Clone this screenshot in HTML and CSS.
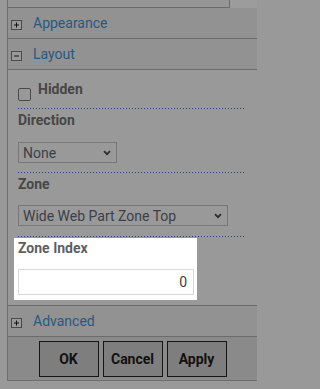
FILE: index.html
```html
<!DOCTYPE html>
<html>
<head>
<meta charset="utf-8">
<link rel="stylesheet" href="styles.css">
</head>
<body>
<div class="pane">
  <div class="top-row"><div class="prev"></div></div>
  <div class="hdr">
    <svg class="tog" width="11" height="10" viewBox="0 0 11 10"><rect x="0.5" y="0.5" width="10" height="9" fill="#9a9a9a" stroke="#4a4a4a"/><path d="M3 5H8M5.5 2.5V7.5" stroke="#111" stroke-width="1"/></svg>
    <span class="hdr-text">Appearance</span>
  </div>
  <div class="hdr">
    <svg class="tog" width="11" height="10" viewBox="0 0 11 10"><rect x="0.5" y="0.5" width="10" height="9" fill="#9a9a9a" stroke="#4a4a4a"/><path d="M3 5H8" stroke="#111" stroke-width="1"/></svg>
    <span class="hdr-text">Layout</span>
  </div>
  <div class="content">
    <div class="check-row dotted">
      <span class="checkbox"></span>
      <span class="lbl check-lbl">Hidden</span>
    </div>
    <div class="field dotted dir">
      <div class="lbl">Direction</div>
      <div class="sel sel-none"><span>None</span><svg class="chev" width="8" height="6" viewBox="0 0 8 6"><path d="M1 1.2L4 4.2L7 1.2" fill="none" stroke="#2e2e2e" stroke-width="1.8"/></svg></div>
    </div>
    <div class="field dotted zone">
      <div class="lbl">Zone</div>
      <div class="sel sel-zone"><span>Wide Web Part Zone Top</span><svg class="chev" width="8" height="6" viewBox="0 0 8 6"><path d="M1 1.2L4 4.2L7 1.2" fill="none" stroke="#2e2e2e" stroke-width="1.8"/></svg></div>
    </div>
    <div class="spot">
      <div class="lbl spot-lbl">Zone Index</div>
      <div class="input">0</div>
    </div>
  </div>
  <div class="hdr">
    <svg class="tog" width="11" height="10" viewBox="0 0 11 10"><rect x="0.5" y="0.5" width="10" height="9" fill="#9a9a9a" stroke="#4a4a4a"/><path d="M3 5H8M5.5 2.5V7.5" stroke="#111" stroke-width="1"/></svg>
    <span class="hdr-text">Advanced</span>
  </div>
  <div class="footer">
    <button class="btn">OK</button>
    <button class="btn">Cancel</button>
    <button class="btn">Apply</button>
  </div>
</div>
</body>
</html>
```
FILE: styles.css
```css
html, body {
  margin: 0;
  padding: 0;
  background: #999999;
  font-family: Roboto, "Liberation Sans", sans-serif;
}
.pane {
  margin-left: 7px;
  width: 249px;
  border-left: 1px solid #6e6e6e;
  border-bottom: 1px solid #6e6e6e;
}
.top-row {
  background: #9c9c9c;
  height: 8px;
}
.prev {
  width: 221px;
  height: 7px;
  background: #969696;
  border-right: 1px solid #6b6b6b;
  border-bottom: 1px solid #6b6b6b;
}
.hdr {
  height: 30px;
  background: #929292;
  border-bottom: 1px solid #6b6b6b;
  display: flex;
  align-items: center;
  padding-left: 3px;
}
.tog {
  display: block;
  margin-top: 3px;
  flex: none;
}
.hdr-text {
  margin-left: 11px;
  font-size: 14px;
  line-height: 16px;
  color: #2a5880;
}
.content {
  padding: 0 12px 5px 10px;
  border-bottom: 1px solid #6b6b6b;
}
.dotted {
  background-image: repeating-linear-gradient(to right, #2c3f78 0 1px, transparent 1px 3px);
  background-size: 100% 1px;
  background-position: left bottom;
  background-repeat: no-repeat;
}
.check-row {
  height: 39px;
  display: flex;
  align-items: flex-start;
}
.checkbox {
  display: block;
  margin-top: 18px;
  width: 11px;
  height: 11px;
  border: 1px solid #4a4a4a;
  border-radius: 2px;
  background: #999;
}
.lbl {
  font-size: 14px;
  line-height: 16px;
  font-weight: bold;
  color: #474747;
}
.check-lbl {
  margin-top: 11px;
  margin-left: 7px;
}
.field {
  padding-top: 3px;
}
.dir {
  padding-bottom: 10px;
}
.zone {
  padding-bottom: 11px;
}
.dir .sel {
  margin-top: 14px;
}
.zone .sel {
  margin-top: 13px;
}
.sel {
  box-sizing: border-box;
  height: 21px;
  border: 1px solid #777;
  display: flex;
  align-items: center;
  justify-content: space-between;
  padding: 0 5px 0 4px;
  font-size: 14px;
  color: #3c3f48;
}
.sel-none { width: 99px; }
.sel-zone { width: 210px; }
.chev { display: block; flex: none; }
.spot {
  margin-top: 1px;
  margin-left: -4px;
  width: 176px;
  background: #fff;
  padding: 2px 3px 5px 4px;
}
.spot-lbl {
  color: #5f5f5f;
}
.input {
  margin-top: 13px;
  box-sizing: border-box;
  width: 176px;
  height: 26px;
  border: 1px solid #d8d8d8;
  font-size: 14px;
  line-height: 24px;
  text-align: right;
  padding-right: 6px;
  color: #3a3f4a;
}
.footer {
  background: #8a8a8a;
  padding: 4px 0 3px;
  display: flex;
  justify-content: center;
  gap: 4px;
}
.btn {
  box-sizing: border-box;
  width: 60px;
  height: 36px;
  border: 1px solid #151515;
  background: #7e7e7e;
  font-family: Roboto, "Liberation Sans", sans-serif;
  font-size: 14px;
  font-weight: bold;
  color: #111;
  padding: 0;
  margin: 0;
}
```
